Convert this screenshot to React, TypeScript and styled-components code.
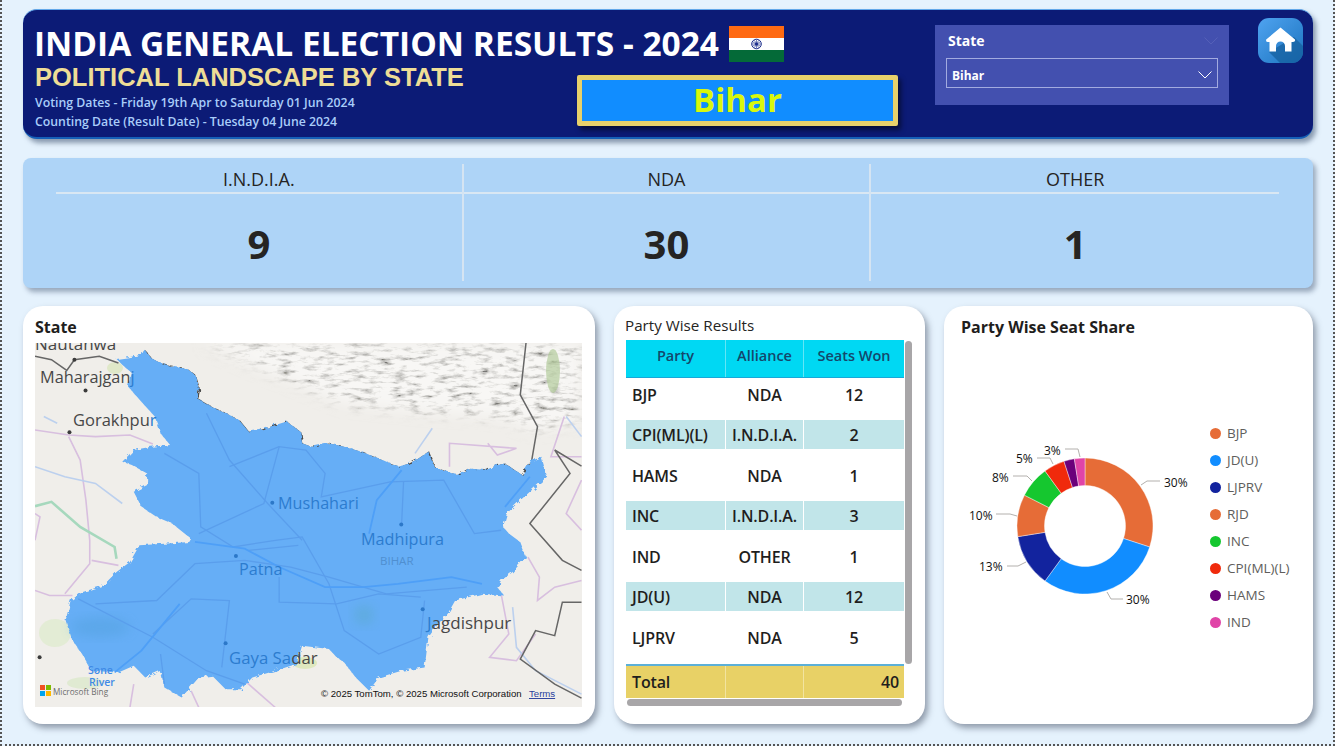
import styled, { createGlobalStyle } from 'styled-components';

const UI = `"Open Sans", "Noto Sans", sans-serif`;

const GlobalStyle = createGlobalStyle`
  html, body {
    margin: 0;
    padding: 0;
    background: #fff;
    overflow: hidden;
  }
  * {
    box-sizing: border-box;
  }
`;

const Page = styled.div`
  width: 1335px;
  height: 746px;
  padding: 9px 20px 0 21px;
  background: #e5f2fd;
  border-left: 2px dotted #555;
  border-right: 2px dotted #555;
  border-bottom: 2px dotted #555;
  font-family: ${UI};
  color: #252423;
  display: flex;
  flex-direction: column;
`;

const Header = styled.header`
  height: 130px;
  background: #0c1b76;
  border-top: 1px solid #62a8ea;
  border-bottom: 2px solid #1560b8;
  border-radius: 14px;
  box-shadow: 3px 4px 5px rgba(60, 80, 110, 0.55);
  padding: 0 0 0 12px;
  display: grid;
  grid-template-columns: 542px 321px 331px 45px;
  grid-template-rows: 52px 1fr;
`;

const TitleRow = styled.div`
  grid-column: 1 / 3;
  grid-row: 1;
  display: flex;
  align-items: flex-end;
  gap: 10px;
`;

const Title = styled.h1`
  margin: 0 0 0 -1px;
  color: #fff;
  font-size: 33.5px;
  font-weight: 700;
  line-height: 38px;
  white-space: nowrap;
`;

const Flag = styled.svg`
  width: 55px;
  height: 36px;
  display: block;
`;

const Intro = styled.div`
  grid-column: 1;
  grid-row: 2;
  padding-top: 1px;
`;

const Subtitle = styled.h2`
  margin: 0 0 2px;
  color: #eedd96;
  font-family: 'Liberation Sans', Arial, sans-serif;
  font-size: 25.5px;
  font-weight: 700;
  line-height: 28px;
  white-space: nowrap;
`;

const DateLine = styled.div`
  color: #a9cdfa;
  font-size: 12.3px;
  font-weight: 600;
  line-height: 19px;
  white-space: nowrap;
`;

const StateBanner = styled.div`
  grid-column: 2;
  grid-row: 2;
  width: 321px;
  height: 51px;
  margin-top: 13px;
  background: #118dff;
  border: 5px solid #e8d16b;
  border-radius: 2px;
  box-shadow: 3px 4px 5px rgba(0, 0, 0, 0.5);
  color: #d8f80c;
  font-size: 33px;
  font-weight: 700;
  line-height: 40px;
  text-align: center;
`;

const Slicer = styled.div`
  grid-column: 3;
  grid-row: 1 / 3;
  width: 294px;
  height: 80px;
  margin: 15px 0 0 37px;
  padding: 6px 11px 0;
  background: #4350af;
  color: #fff;
  position: relative;
`;

const SlicerLabel = styled.div`
  font-size: 14px;
  font-weight: 700;
  line-height: 20px;
  padding-left: 2px;
`;

const SlicerBox = styled.div`
  margin-top: 7px;
  height: 30px;
  border: 1px solid #a3abe0;
  padding: 4px 5px 0;
  display: flex;
  align-items: center;
  justify-content: space-between;
  font-size: 12px;
  font-weight: 700;
`;

const HomeButton = styled.div`
  grid-column: 4;
  grid-row: 1 / 3;
  width: 45px;
  height: 45px;
  margin: 8px 0 0 29px;
  border-radius: 11px;
  overflow: hidden;
`;

const Kpis = styled.section`
  height: 130px;
  margin-top: 19px;
  background: #aed4f7;
  border-radius: 8px;
  box-shadow: 3px 4px 5px rgba(60, 80, 110, 0.45);
  padding: 6px 34px 7px 33px;
  display: grid;
  grid-template-columns: repeat(3, 1fr);
`;

const Kpi = styled.div<{ $last?: boolean }>`
  display: flex;
  flex-direction: column;
  border-right: ${(p) => (p.$last ? 'none' : '2px solid #d5e4f2')};
`;

const KpiLabel = styled.div`
  height: 30px;
  border-bottom: 2px solid #d9e7f3;
  font-size: 18px;
  line-height: 31px;
  text-align: center;
`;

const KpiValue = styled.div`
  flex: 1;
  display: flex;
  align-items: center;
  justify-content: center;
  font-size: 40px;
  font-weight: 700;
  padding-top: 11px;
`;

const Panels = styled.div`
  margin-top: 18px;
  display: grid;
  grid-template-columns: 572px 311px 369px;
  gap: 19px;
`;

const Card = styled.section<{ $pad: string }>`
  height: 418px;
  background: #fff;
  border-radius: 20px;
  box-shadow: 3px 4px 6px rgba(60, 70, 90, 0.5);
  padding: ${(p) => p.$pad};
`;

const CardTitle = styled.h3`
  margin: 0;
  font-size: 16px;
  font-weight: 700;
  line-height: 22px;
  color: #1f1e1d;
`;

const TableTitle = styled.h3`
  margin: 0 0 4px -1px;
  font-size: 15.2px;
  font-weight: 400;
  line-height: 22px;
  color: #252423;
`;

const MapFrame = styled.svg`
  display: block;
  width: 547px;
  height: 364px;
  margin-top: 5px;
`;

const TableArea = styled.div`
  display: grid;
  grid-template-columns: 278px 7px;
  column-gap: 1px;
  grid-template-rows: 324px 34px 8px;
`;

const Head = styled.div`
  height: 38px;
  background: #00d8f3;
  border-bottom: 1px solid #18a8d8;
  display: grid;
  grid-template-columns: 100px 78px 100px;
`;

const HeadCell = styled.div<{ $last?: boolean }>`
  display: flex;
  align-items: center;
  justify-content: center;
  font-size: 14.5px;
  font-weight: 600;
  color: #14476b;
  padding-bottom: 6px;
  white-space: nowrap;
  border-right: ${(p) => (p.$last ? 'none' : '1px solid #62e6f6')};
`;

const Body = styled.div`
  padding-top: 1px;
  display: flex;
  flex-direction: column;
  gap: 11.5px;
`;

const Row = styled.div<{ $band: boolean }>`
  height: 29px;
  display: grid;
  grid-template-columns: 100px 78px 100px;
  background: ${(p) => (p.$band ? '#c1e5e9' : '#fff')};
`;

const Cell = styled.div<{ $align?: string; $rule?: boolean }>`
  display: flex;
  align-items: center;
  justify-content: ${(p) => p.$align ?? 'center'};
  padding: 2px 6px 0;
  font-size: 16px;
  font-weight: 600;
  letter-spacing: -0.15px;
  color: #1f1e1d;
  white-space: nowrap;
  border-right: ${(p) => (p.$rule ? '1px solid #fff' : 'none')};
`;

const TotalRow = styled.div`
  grid-column: 1;
  grid-row: 2;
  display: grid;
  grid-template-columns: 100px 78px 100px;
  background: #e8d166;
  border-top: 2px solid #5cb0d8;
`;

const TotalCell = styled(Cell)`
  padding: 0 5px 0 6px;
  border-right: ${(p) => (p.$rule ? '1px solid #f2e4a0' : 'none')};
`;

const VScroll = styled.div`
  grid-column: 2;
  grid-row: 1;
  margin-top: 1px;
  background: #a8a6a8;
  border-radius: 4px;
`;

const HScroll = styled.div`
  grid-column: 1;
  grid-row: 3;
  margin: 1px 2px 0 1px;
  background: #a8a6a8;
  border-radius: 4px;
`;

const ChartRow = styled.div`
  display: flex;
  align-items: flex-start;
  margin-top: 88px;
`;

const Donut = styled.svg`
  width: 249px;
  height: 200px;
  display: block;
  flex: none;
`;

const Legend = styled.ul`
  list-style: none;
  margin: -3px 0 0;
  padding: 0;
  display: flex;
  flex-direction: column;
  gap: 7px;
`;

const LegendItem = styled.li`
  display: flex;
  align-items: center;
  gap: 6px;
  height: 20px;
  font-size: 13.5px;
  color: #605e5c;
  white-space: nowrap;
`;

const Dot = styled.span<{ $color: string }>`
  width: 11px;
  height: 11px;
  border-radius: 50%;
  background: ${(p) => p.$color};
`;

const ClearMark = styled.span`
  position: absolute;
  top: 12px;
  right: 11px;
  line-height: 0;
`;

const alliances = [
  { name: 'I.N.D.I.A.', seats: 9 },
  { name: 'NDA', seats: 30 },
  { name: 'OTHER', seats: 1 },
];

const results = [
  ['BJP', 'NDA', '12'],
  ['CPI(ML)(L)', 'I.N.D.I.A.', '2'],
  ['HAMS', 'NDA', '1'],
  ['INC', 'I.N.D.I.A.', '3'],
  ['IND', 'OTHER', '1'],
  ['JD(U)', 'NDA', '12'],
  ['LJPRV', 'NDA', '5'],
];

const shares = [
  { name: 'BJP', value: 12, color: '#e66c37' },
  { name: 'JD(U)', value: 12, color: '#118dff' },
  { name: 'LJPRV', value: 5, color: '#12239e' },
  { name: 'RJD', value: 4, color: '#e66c37' },
  { name: 'INC', value: 3, color: '#15c72f' },
  { name: 'CPI(ML)(L)', value: 2, color: '#f02a0c' },
  { name: 'HAMS', value: 1, color: '#6b007b' },
  { name: 'IND', value: 1, color: '#e044a7' },
];

// leader lines and labels, in page pixels
const donutLabels = [
  { text: '30%', x: 1164, y: 487, line: '1141,485 1147,481 1160,481' },
  { text: '30%', x: 1126, y: 604, line: '1107,592 1111,599 1123,599' },
  { text: '13%', x: 979, y: 571, line: '1007,566 1018,566 1026,562' },
  { text: '10%', x: 969, y: 520, line: '996,514 1010,514 1017,516' },
  { text: '8%', x: 992, y: 482, line: '1013,476 1027,476 1032,481' },
  { text: '5%', x: 1016, y: 463, line: '1037,458 1050,458 1053,464' },
  { text: '3%', x: 1044, y: 455, line: '1065,449 1078,449 1080,457' },
];

const DONUT_X = 961;
const DONUT_Y = 426;

function slicePath(cx: number, cy: number, r0: number, r1: number, a0: number, a1: number) {
  const p = (r: number, a: number) => `${cx + r * Math.sin(a)} ${cy - r * Math.cos(a)}`;
  const large = a1 - a0 > Math.PI ? 1 : 0;
  return `M${p(r1, a0)} A${r1} ${r1} 0 ${large} 1 ${p(r1, a1)} L${p(r0, a1)} A${r0} ${r0} 0 ${large} 0 ${p(r0, a0)} Z`;
}

function SeatDonut() {
  let acc = 0;
  const total = shares.reduce((s, d) => s + d.value, 0);
  return (
    <Donut viewBox="0 0 249 200">
      {shares.map((s) => {
        const a0 = (acc / total) * Math.PI * 2;
        acc += s.value;
        const a1 = (acc / total) * Math.PI * 2;
        return (
          <path
            key={s.name}
            d={slicePath(1085 - DONUT_X, 526 - DONUT_Y, 40.5, 68, a0, a1)}
            fill={s.color}
            stroke="#fff"
            strokeWidth="0.4"
          />
        );
      })}
      <g transform={`translate(${-DONUT_X} ${-DONUT_Y})`}>
        {donutLabels.map((l) => (
          <g key={l.line}>
            <polyline points={l.line} fill="none" stroke="#b3b0ad" strokeWidth="1" />
            <text x={l.x} y={l.y} fontSize="12" fontWeight="500" fill="#111">
              {l.text}
            </text>
          </g>
        ))}
      </g>
    </Donut>
  );
}

// map geometry was traced on a 2.613 x 2.99 grid, px() brings it to map pixels
type Pt = [number, number];
const px = ([x, y]: Pt): Pt => [x / 2.613 - 35.2, y / 2.99 - 43.5];
const pts = (list: Pt[]) => list.map(px).map((p) => p.join(',')).join(' ');

const bihar: Pt[] = [
  [305, 178], [340, 172], [370, 165], [378, 150], [395, 175], [420, 190], [450, 200], [490, 208],
  [510, 225], [520, 265], [515, 295], [560, 325], [600, 345], [625, 360], [650, 395], [680, 390],
  [720, 375], [750, 365], [785, 395], [790, 430], [815, 440], [860, 430], [900, 440], [945, 455],
  [990, 475], [1040, 500], [1070, 490], [1095, 475], [1120, 455], [1135, 500], [1170, 515], [1195, 525],
  [1225, 505], [1270, 510], [1300, 495], [1320, 490], [1345, 510], [1365, 525], [1385, 485], [1415, 470],
  [1425, 510], [1430, 530], [1400, 560], [1360, 600], [1325, 640], [1315, 680], [1330, 700], [1360, 725],
  [1375, 770], [1340, 815], [1310, 840], [1300, 860], [1318, 885], [1260, 880], [1190, 900], [1170, 940],
  [1145, 970], [1120, 1010], [1110, 1100], [1050, 1110], [990, 1130], [965, 1170], [930, 1130], [900, 1085],
  [880, 1070], [860, 1045], [790, 1035], [775, 1090], [720, 1110], [660, 1130], [630, 1165], [590, 1165],
  [555, 1125], [520, 1130], [475, 1190], [430, 1160], [420, 1110], [380, 1130], [350, 1095], [310, 1115],
  [240, 1110], [215, 1060], [190, 1020], [172, 960], [185, 900], [215, 875], [270, 855], [305, 815],
  [340, 785], [365, 735], [430, 730], [495, 725], [500, 715], [450, 670], [410, 650], [370, 620],
  [350, 575], [385, 555], [385, 520], [345, 495], [320, 485], [350, 450], [395, 440], [445, 435],
  [420, 400], [405, 350], [365, 300], [335, 260], [345, 220], [320, 195],
];

const northBorder: Pt[] = bihar.slice(3, 39);

const hills: Pt[] = [
  [530, 130], [1520, 130], [1520, 360], [1400, 390], [1300, 350], [1100, 335], [900, 310], [700, 215],
];

const darkLines: Pt[][] = [
  [[92, 170], [135, 180], [175, 212], [195, 180], [260, 170], [310, 190]],
  [[1375, 130], [1360, 285], [1405, 380], [1390, 480]],
  [[1520, 498], [1450, 450], [1490, 520], [1385, 670], [1470, 780], [1520, 810]],
  [[1520, 905], [1470, 905], [1450, 1005], [1400, 990], [1360, 1075], [1450, 1150], [1520, 1192]],
];

const pinkLines: Pt[][] = [
  [[92, 390], [180, 405], [250, 410], [340, 405], [400, 432]],
  [[180, 410], [210, 480], [225, 600], [235, 720], [235, 790], [170, 880]],
  [[92, 870], [130, 885], [190, 885]],
  [[240, 780], [310, 795]],
  [[92, 720], [105, 650], [92, 640]],
  [[1380, 770], [1410, 830], [1405, 900], [1450, 860], [1520, 840]],
  [[1310, 880], [1330, 1000], [1280, 1070], [1350, 1080], [1400, 1000]],
  [[1475, 350], [1440, 470], [1520, 470]],
  [[1520, 540], [1480, 640], [1520, 690]],
  [[645, 1145], [720, 1220]],
  [[350, 1150], [340, 1220]],
  [[500, 1170], [520, 1220]],
  [[1175, 500], [1175, 430], [1350, 445], [1300, 465], [1275, 430]],
];

const waterLines: Pt[][] = [
  [[92, 500], [170, 530], [250, 550], [320, 610]],
  [[115, 350], [150, 370]],
  [[1130, 385], [1085, 460]],
  [[1340, 920], [1350, 1040], [1400, 1110], [1520, 1180]],
  [[1480, 350], [1520, 410]],
];

const innerRoads: Pt[][] = [
  [[430, 460], [520, 520], [525, 680], [610, 740], [720, 720], [790, 710], [860, 850], [900, 990], [990, 1060], [1100, 1010], [1110, 900]],
  [[540, 340], [600, 480], [700, 610], [790, 720]],
  [[520, 700], [690, 610], [730, 440], [800, 450], [850, 520], [840, 590], [1020, 545], [1160, 540], [1240, 700], [1310, 690]],
  [[600, 500], [730, 440]],
  [[1055, 545], [1050, 670]],
  [[205, 895], [400, 1010], [540, 1110], [640, 1150]],
  [[250, 910], [410, 900], [510, 790], [640, 780], [760, 800], [860, 830], [1010, 880], [1220, 860]],
  [[400, 1000], [500, 895], [600, 900], [580, 1100]],
  [[650, 750], [780, 735]],
  [[730, 830], [730, 905], [880, 910], [990, 880], [1100, 890]],
  [[420, 1060], [430, 1150]],
];

const blueWater: Pt[][] = [
  [[510, 725], [640, 745], [730, 800], [850, 860], [950, 860], [1040, 850], [1180, 830], [1260, 850]],
  [[965, 700], [985, 600], [1050, 510]],
  [[300, 1115], [370, 1050], [470, 910]],
  [[1320, 620], [1385, 530]],
];

const towns: Pt[] = [
  [195, 180], [224, 272], [182, 397], [104, 1070],
];
const blueTowns: Pt[] = [
  [712, 608], [1049, 673], [1105, 926], [590, 1028], [617, 767],
];

const LAND = '#474747';
const WATER_TEXT = '#2c7ccf';

function BiharMap() {
  return (
    <MapFrame viewBox="0 0 547 364" fontFamily={UI}>
      <defs>
        <filter id="relief" x="0" y="0" width="100%" height="100%">
          <feTurbulence type="fractalNoise" baseFrequency="0.07 0.22" numOctaves="4" seed="11" />
          <feColorMatrix values="2.6 0 0 0 -0.38  2.6 0 0 0 -0.38  2.6 0 0 0 -0.39  0 0 0 0 1" />
        </filter>
        <filter id="rough" x="-5%" y="-5%" width="110%" height="110%">
          <feTurbulence type="fractalNoise" baseFrequency="0.22" numOctaves="2" seed="3" result="n" />
          <feDisplacementMap in="SourceGraphic" in2="n" scale="5" />
        </filter>
        <filter id="soft" x="-30%" y="-30%" width="160%" height="160%">
          <feGaussianBlur stdDeviation="6" />
        </filter>
        <filter id="fade" x="-10%" y="-20%" width="120%" height="140%">
          <feGaussianBlur stdDeviation="7" />
        </filter>
        <mask id="hillArea">
          <polygon points={pts(hills)} fill="#fff" filter="url(#fade)" />
        </mask>
      </defs>

      <rect width="547" height="364" fill="#f0eeea" />
      <g mask="url(#hillArea)">
        <rect width="547" height="140" filter="url(#relief)" opacity="0.5" />
      </g>
      <ellipse cx="518" cy="28" rx="7" ry="22" fill="#a9c58d" opacity="0.6" />
      <ellipse cx="50" cy="340" rx="18" ry="6" fill="#dce9cc" opacity="0.8" />
      <ellipse cx="20" cy="290" rx="16" ry="14" fill="#e0ebcf" opacity="0.8" />
      <ellipse cx="270" cy="320" rx="12" ry="6" fill="#dfe8bf" />
      <ellipse cx="80" cy="25" rx="8" ry="6" fill="#dfe8c8" />

      {pinkLines.map((l, i) => (
        <polyline key={i} points={pts(l)} fill="none" stroke="#d8bfdf" strokeWidth="1.6" />
      ))}
      {waterLines.map((l, i) => (
        <polyline key={i} points={pts(l)} fill="none" stroke="#bcd0ee" strokeWidth="1.6" />
      ))}
      <polyline
        points={pts([[92, 618], [135, 605], [210, 680], [300, 740], [305, 775]])}
        fill="none"
        stroke="#a6d8bd"
        strokeWidth="2.6"
      />
      {darkLines.map((l, i) => (
        <polyline key={i} points={pts(l)} fill="none" stroke="#666" strokeWidth="1.5" />
      ))}

      <polyline
        points={pts(northBorder)}
        fill="none"
        stroke="#4c4c4c"
        strokeWidth="2.6"
        filter="url(#rough)"
        transform="translate(0 1.5)"
      />
      <polygon points={pts(bihar)} fill="#66aef6" filter="url(#rough)" />
      <ellipse cx="65" cy="284" rx="30" ry="10" fill="#4d9ed8" opacity="0.4" filter="url(#soft)" />
      <ellipse cx="329" cy="272" rx="10" ry="10" fill="#58a8c8" opacity="0.5" filter="url(#soft)" />
      {innerRoads.map((l, i) => (
        <polyline key={i} points={pts(l)} fill="none" stroke="#5a9eec" strokeWidth="1.3" />
      ))}
      {blueWater.map((l, i) => (
        <polyline key={i} points={pts(l)} fill="none" stroke="#4e9ff7" strokeWidth="1.8" />
      ))}

      {towns.map((t, i) => {
        const [x, y] = px(t);
        return <circle key={i} cx={x} cy={y} r="2" fill="#3b3b3b" />;
      })}
      {blueTowns.map((t, i) => {
        const [x, y] = px(t);
        return <circle key={i} cx={x} cy={y} r="2" fill="#2c78c8" />;
      })}

      <g fill={LAND}>
        <text x="0" y="7" fontSize="17">Nautanwa</text>
        <text x="5" y="40" fontSize="16.3">
          Maharajgan<tspan fill={WATER_TEXT}>j</tspan>
        </text>
        <text x="38" y="83" fontSize="16.5">
          Gorakhpu<tspan fill={WATER_TEXT}>r</tspan>
        </text>
        <text x="392" y="286" fontSize="17">
          <tspan fill={WATER_TEXT}>J</tspan>agdishpur
        </text>
        <text x="194" y="321" fontSize="16.8">
          <tspan fill={WATER_TEXT}>Gaya Sa</tspan>dar
        </text>
      </g>
      <g fontSize="16.2" fill={WATER_TEXT}>
        <text x="243" y="166">Mushahari</text>
        <text x="326" y="202">Madhipura</text>
        <text x="204" y="232">Patna</text>
      </g>
      <text x="345" y="222" fontSize="11.5" fill="#4f8fd0">BIHAR</text>
      <g fontSize="10.5" fontWeight="600" fill="#3f8ae6">
        <text x="53" y="331">Sone</text>
        <text x="54" y="343">River</text>
      </g>

      <rect x="5" y="342" width="5" height="5" fill="#f25022" />
      <rect x="11" y="342" width="5" height="5" fill="#7fba00" />
      <rect x="5" y="348" width="5" height="5" fill="#00a4ef" />
      <rect x="11" y="348" width="5" height="5" fill="#ffb900" />
      <text x="18" y="352" fontSize="8.2" fill="#6d6d6d">Microsoft Bing</text>
      <g fontFamily="'Liberation Sans', Arial, sans-serif" fontSize="9.6">
        <text x="286" y="354" fill="#111">© 2025 TomTom, © 2025 Microsoft Corporation</text>
        <text x="494" y="354" fill="#2a3f9d" textDecoration="underline">Terms</text>
      </g>
    </MapFrame>
  );
}

function IndiaFlag() {
  const spokes = Array.from({ length: 12 }, (_, i) => (i * Math.PI) / 6);
  return (
    <Flag viewBox="0 0 55 36">
      <rect width="55" height="12" fill="#ff6a13" />
      <rect y="12" width="55" height="12" fill="#fff" />
      <rect y="24" width="55" height="12" fill="#046a38" />
      <circle cx="27.5" cy="18" r="4.8" fill="none" stroke="#1c2d8c" strokeWidth="1" />
      {spokes.map((a) => (
        <line
          key={a}
          x1="27.5"
          y1="18"
          x2={27.5 + 4.4 * Math.cos(a)}
          y2={18 + 4.4 * Math.sin(a)}
          stroke="#1c2d8c"
          strokeWidth="0.6"
        />
      ))}
      <circle cx="27.5" cy="18" r="1.5" fill="#1c2d8c" />
    </Flag>
  );
}

function HomeIcon() {
  return (
    <svg width="45" height="45" viewBox="0 0 45 45" style={{ display: 'block' }}>
      <defs>
        <linearGradient id="homeBg" x1="0" y1="0" x2="1" y2="1">
          <stop offset="0" stopColor="#4fa3f0" />
          <stop offset="1" stopColor="#1c74bf" />
        </linearGradient>
      </defs>
      <rect width="45" height="45" fill="url(#homeBg)" />
      <path d="M36 19 L45 28 L45 45 L22 45 L11 34 Z" fill="#15609f" opacity="0.75" />
      <path
        d="M22.5 9.5 L37 21.5 Q37.6 24 35 24 L33.5 24 L33.5 33.5 L27 33.5 L27 28 A4.5 4.5 0 0 0 18 28 L18 33.5 L11.5 33.5 L11.5 24 L10 24 Q7.6 24 8.2 21.5 Z"
        fill="#fff"
      />
    </svg>
  );
}

function Chevron({ color }: { color: string }) {
  return (
    <svg width="14" height="8" viewBox="0 0 14 8">
      <polyline points="0.5,0.5 7,7 13.5,0.5" fill="none" stroke={color} strokeWidth="1" />
    </svg>
  );
}

export default function App() {
  return (
    <>
      <GlobalStyle />
      <Page>
        <Header>
          <TitleRow>
            <Title>INDIA GENERAL ELECTION RESULTS - 2024</Title>
            <IndiaFlag />
          </TitleRow>
          <Intro>
            <Subtitle>POLITICAL LANDSCAPE BY STATE</Subtitle>
            <DateLine>Voting Dates - Friday 19th Apr to Saturday 01 Jun 2024</DateLine>
            <DateLine>Counting Date (Result Date) - Tuesday 04 June 2024</DateLine>
          </Intro>
          <StateBanner>Bihar</StateBanner>
          <Slicer>
            <SlicerLabel>State</SlicerLabel>
            <ClearMark>
              <Chevron color="#5560b8" />
            </ClearMark>
            <SlicerBox>
              Bihar
              <Chevron color="#fff" />
            </SlicerBox>
          </Slicer>
          <HomeButton>
            <HomeIcon />
          </HomeButton>
        </Header>

        <Kpis>
          {alliances.map((a, i) => (
            <Kpi key={a.name} $last={i === alliances.length - 1}>
              <KpiLabel>{a.name}</KpiLabel>
              <KpiValue>{a.seats}</KpiValue>
            </Kpi>
          ))}
        </Kpis>

        <Panels>
          <Card $pad="10px 12px 0">
            <CardTitle>State</CardTitle>
            <BiharMap />
          </Card>

          <Card $pad="8px 12px 0 12px">
            <TableTitle>Party Wise Results</TableTitle>
            <TableArea>
              <div>
                <Head>
                  <HeadCell>Party</HeadCell>
                  <HeadCell>Alliance</HeadCell>
                  <HeadCell $last>Seats Won</HeadCell>
                </Head>
                <Body>
                  {results.map((r, i) => (
                    <Row key={r[0]} $band={i % 2 === 1}>
                      <Cell $align="flex-start" $rule>{r[0]}</Cell>
                      <Cell $rule>{r[1]}</Cell>
                      <Cell>{r[2]}</Cell>
                    </Row>
                  ))}
                </Body>
              </div>
              <VScroll />
              <TotalRow>
                <TotalCell $align="flex-start" $rule>Total</TotalCell>
                <TotalCell $rule />
                <TotalCell $align="flex-end">40</TotalCell>
              </TotalRow>
              <HScroll />
            </TableArea>
          </Card>

          <Card $pad="10px 0 0 17px">
            <CardTitle>Party Wise Seat Share</CardTitle>
            <ChartRow>
              <SeatDonut />
              <Legend>
                {shares.map((s) => (
                  <LegendItem key={s.name}>
                    <Dot $color={s.color} />
                    {s.name}
                  </LegendItem>
                ))}
              </Legend>
            </ChartRow>
          </Card>
        </Panels>
      </Page>
    </>
  );
}
